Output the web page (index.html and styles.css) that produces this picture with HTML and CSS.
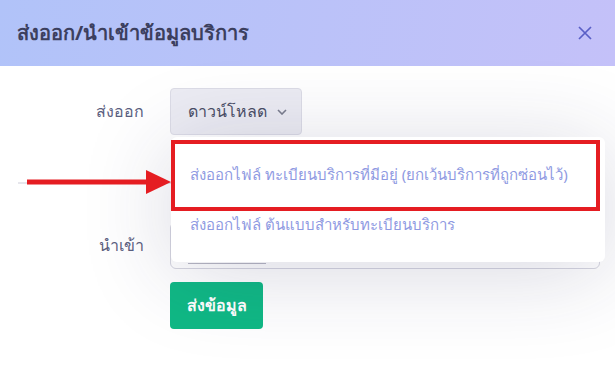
FILE: index.html
```
<!DOCTYPE html>
<html lang="th">
<head>
    <meta charset="UTF-8">
    <meta name="viewport" content="width=device-width, initial-scale=1.0">
    <title>ส่งออก/นำเข้าข้อมูลบริการ</title>
    <link rel="stylesheet" href="styles.css">
</head>
<body>
    <div class="modal">
        <div class="modal-header">
            <h2>ส่งออก/นำเข้าข้อมูลบริการ</h2>
            <svg class="close" width="14" height="14" viewBox="0 0 14 14"><path d="M1 1l12 12M13 1L1 13" stroke="#5a5fc6" stroke-width="1.7"/></svg>
        </div>
        <div class="modal-body">
            <div class="row">
                <label>ส่งออก</label>
                <div class="dropdown">
                    <button class="btn-download">ดาวน์โหลด
                        <svg width="10" height="6" viewBox="0 0 10 6"><path d="M1 1l4 4 4-4" fill="none" stroke="#7a7d8e" stroke-width="1.6"/></svg>
                    </button>
                    <div class="menu">
                        <a class="item">ส่งออกไฟล์ ทะเบียนบริการที่มีอยู่ (ยกเว้นบริการที่ถูกซ่อนไว้)</a>
                        <a class="item">ส่งออกไฟล์ ต้นแบบสำหรับทะเบียนบริการ</a>
                    </div>
                    <div class="highlight"></div>
                </div>
            </div>
            <hr class="divider">
            <div class="row">
                <label>นำเข้า</label>
                <div class="file-box"><span class="file-btn"></span></div>
            </div>
            <div class="row">
                <span></span>
                <button class="btn-submit">ส่งข้อมูล</button>
            </div>
        </div>
        <svg class="arrow" width="150" height="30" viewBox="0 0 150 30">
            <path d="M0 15h124" stroke="#e51d22" stroke-width="5"/>
            <path d="M119 3l25 12-25 12z" fill="#e51d22"/>
        </svg>
    </div>
</body>
</html>
```
FILE: styles.css
```
body {
    margin: 0;
    font-family: "Noto Sans", sans-serif;
    background: #fff;
}
.modal {
    position: relative;
    width: 615px;
    height: 368px;
    overflow: hidden;
}
.modal-header {
    height: 66px;
    padding: 0 23px 0 17px;
    display: flex;
    align-items: center;
    justify-content: space-between;
    background: linear-gradient(100deg, #b1c3f9, #c4c1f9);
}
.modal-header h2 {
    margin: 0;
    font-size: 20px;
    font-weight: 700;
    color: #3c3f5e;
}
.modal-body {
    padding-top: 22px;
}
.row {
    display: grid;
    grid-template-columns: 144px auto;
    column-gap: 26px;
    align-items: center;
    margin-bottom: 13px;
}
.row label {
    text-align: right;
    font-size: 16px;
    color: #5b6080;
}
.dropdown {
    position: relative;
}
.btn-download {
    height: 47px;
    padding: 0 14px 0 17px;
    display: flex;
    align-items: center;
    gap: 10px;
    font-family: inherit;
    font-size: 16px;
    color: #4a4e66;
    background: #ececf3;
    border: 1px solid #dcdce6;
    border-radius: 4px;
}
.menu {
    position: absolute;
    top: 49px;
    left: 1px;
    width: 410px;
    padding: 12px 12px 13px 12px;
    background: #fff;
    border-radius: 6px;
    box-shadow: 0 10px 90px rgba(40, 40, 90, 0.18);
    z-index: 2;
}
.item {
    display: block;
    height: 50px;
    line-height: 50px;
    padding-left: 7px;
    font-size: 15px;
    color: #8f9ae2;
    white-space: nowrap;
}
.highlight {
    position: absolute;
    top: 52px;
    left: 1px;
    width: 421px;
    height: 63px;
    border: 4px solid #e51d22;
    z-index: 3;
}
.divider {
    margin: 47px 18px 38px 18px;
    border: none;
    border-top: 2px solid #e6e6ec;
}
.file-box {
    height: 45px;
    width: 428px;
    border: 1px solid #d6d6e0;
    border-radius: 6px;
    position: relative;
}
.file-btn {
    position: absolute;
    left: 17px;
    bottom: 4px;
    width: 78px;
    border-bottom: 1px solid #b8b8c4;
}
.btn-submit {
    width: 93px;
    height: 47px;
    font-family: inherit;
    font-size: 16px;
    font-weight: 700;
    color: #fff;
    background: #10b985;
    border: none;
    border-radius: 4px;
}
.arrow {
    position: absolute;
    left: 27px;
    top: 167px;
    z-index: 4;
}
```
